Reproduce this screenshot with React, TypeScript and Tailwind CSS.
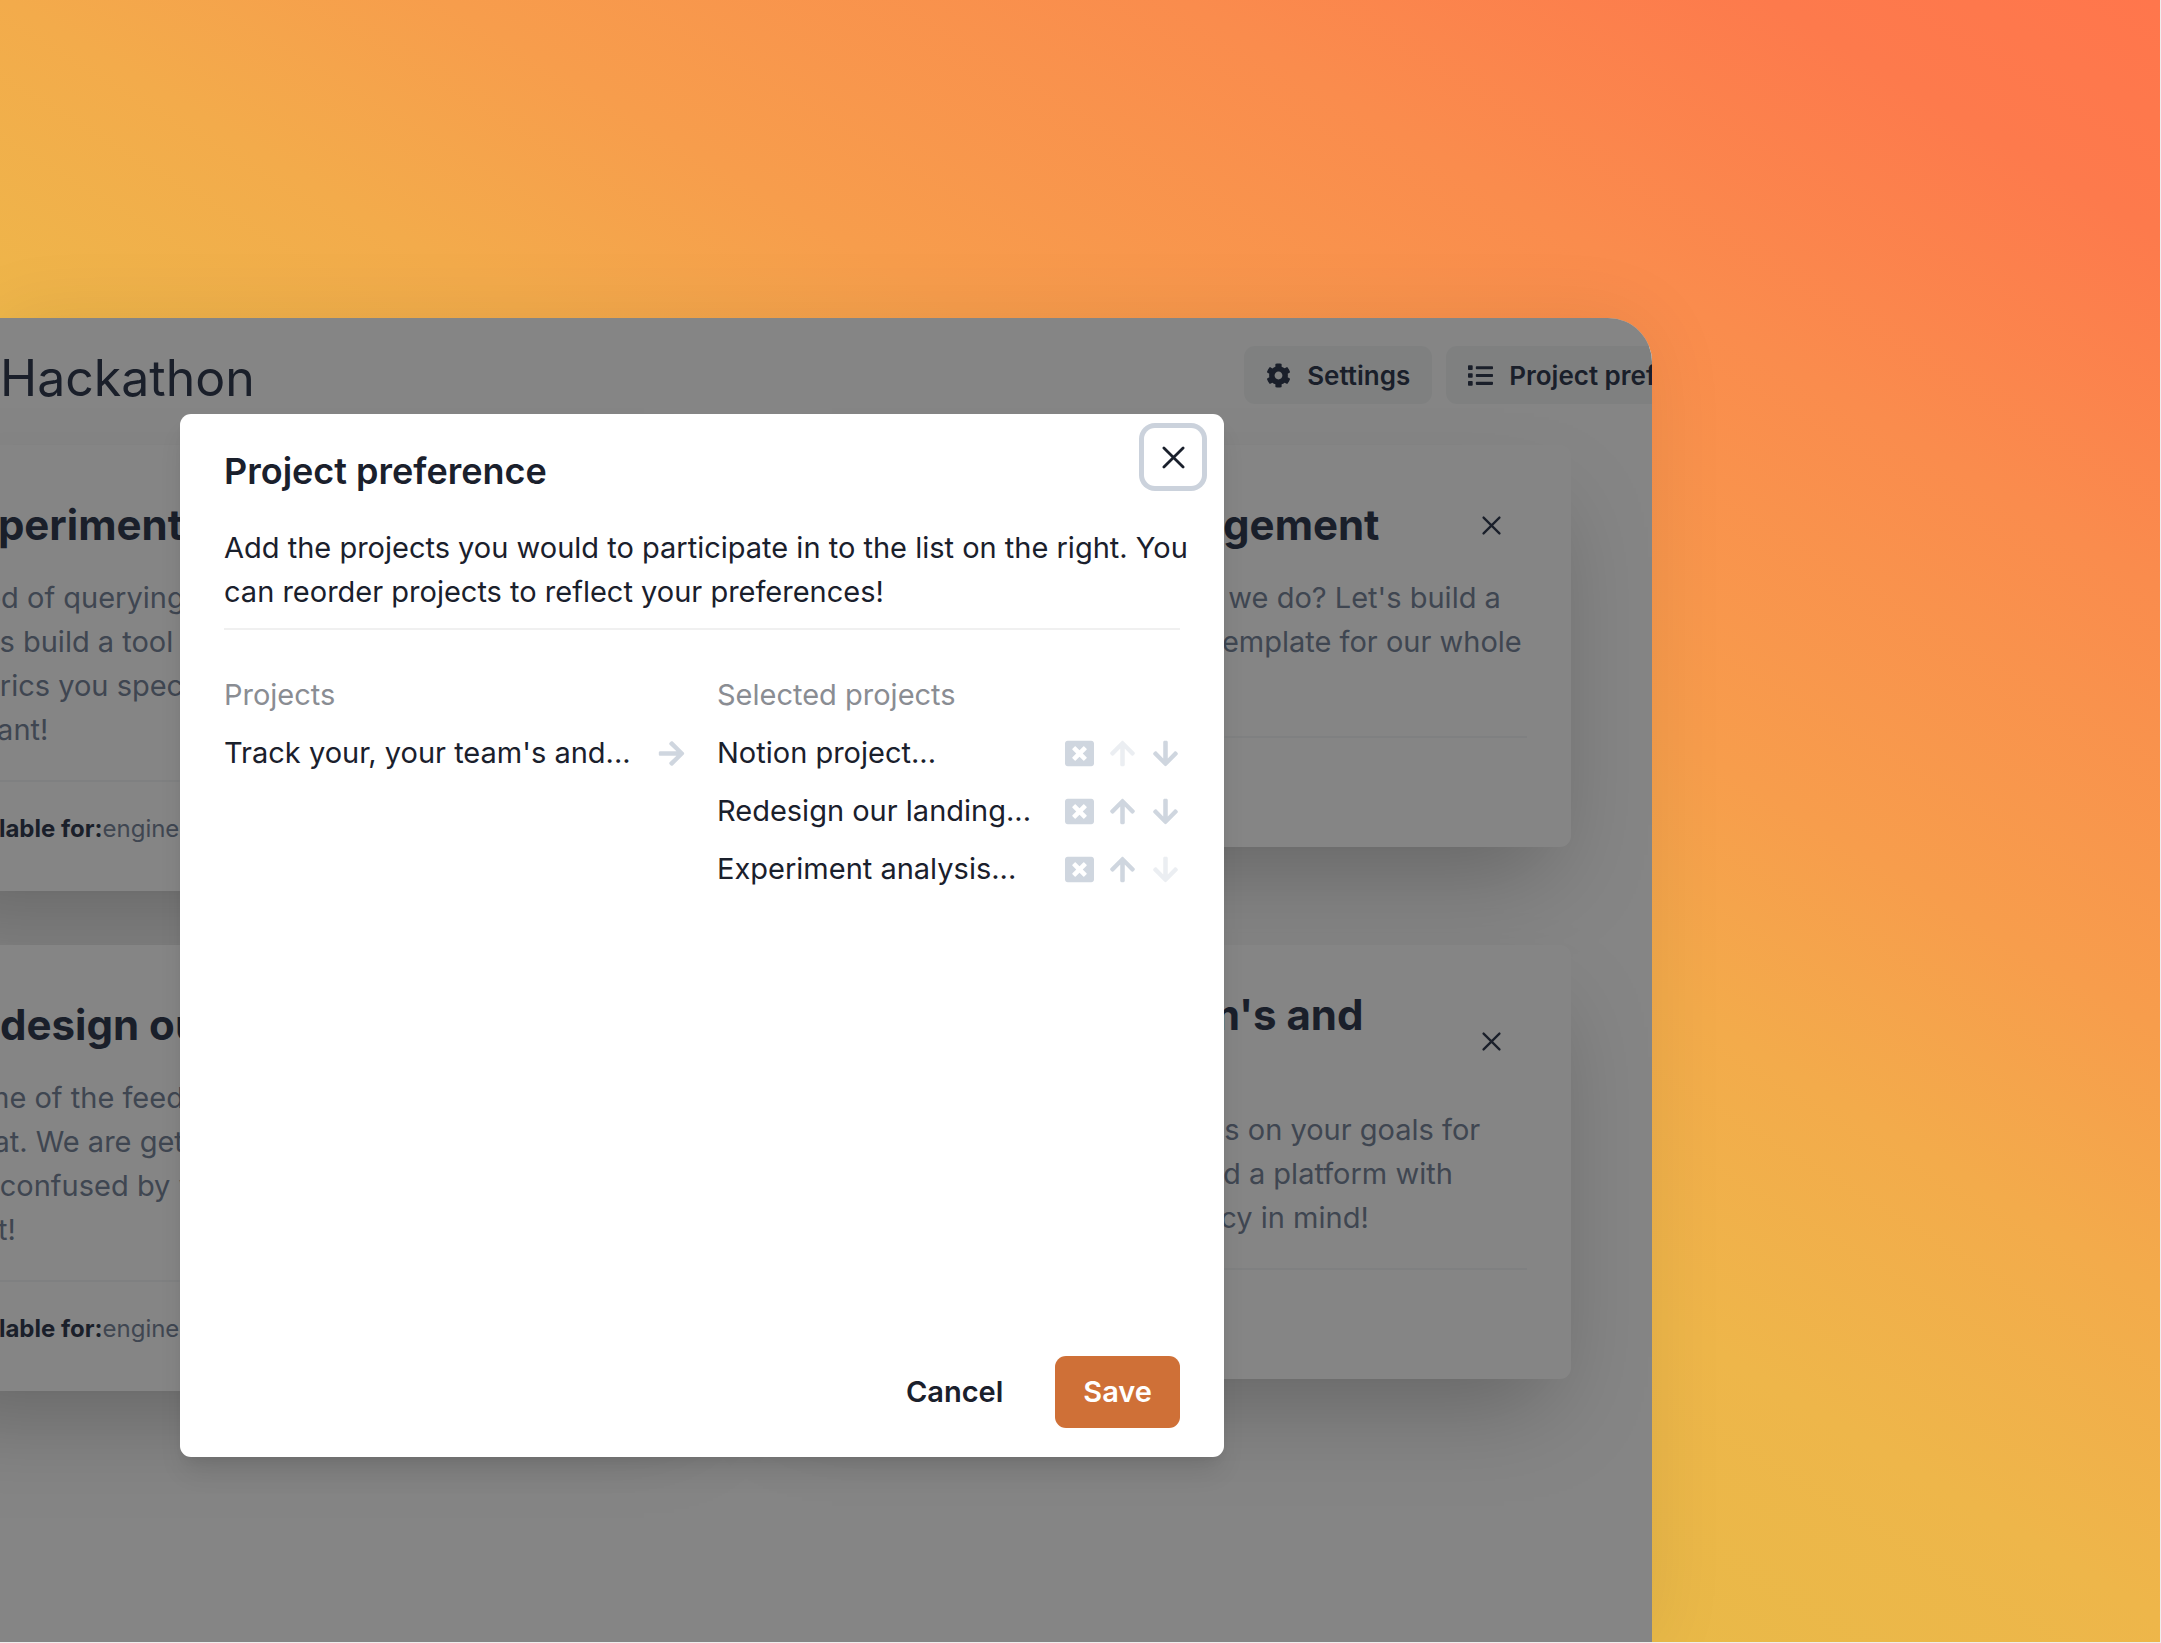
import { FaArrowDown, FaArrowRight, FaArrowUp, FaCog, FaList, FaWindowClose } from "react-icons/fa";

const PROJECTS = ["Track your, your team's and..."];

const SELECTED = ["Notion project...", "Redesign our landing...", "Experiment analysis..."];

function CloseIcon({ className }: { className?: string }) {
  return (
    <svg className={className} viewBox="0 0 24 24" fill="none" stroke="currentColor" strokeWidth="2.9" strokeLinecap="round" aria-hidden="true">
      <path d="M2 2L22 22M22 2L2 22" />
    </svg>
  );
}

type CardProps = { title: string[]; lines: string[]; roles?: string };

function ProjectCard({ title, lines, roles }: CardProps) {
  return (
    <article className="rounded-[11px] bg-white px-11 pt-11 pb-[43px] shadow-[0_45px_91px_-22px_rgba(0,0,0,0.25)]">
      <div className="flex items-center justify-between">
        <h2 className="text-[42px] leading-[52px] font-bold whitespace-nowrap">
          {title.map((line) => (
            <span key={line} className="block">{line}</span>
          ))}
        </h2>
        <button type="button" aria-label="Remove project" className="grid size-[72px] shrink-0 place-items-center">
          <CloseIcon className="size-[19px]" />
        </button>
      </div>
      <p className="pt-[15px] text-[29px] leading-[44px] whitespace-nowrap text-[#7a879c]">
        {lines.map((line) => (
          <span key={line} className="block">{line}</span>
        ))}
      </p>
      <hr className="my-7 border-t-2 border-[#f4f6f8]" />
      <p className="h-[38px] text-2xl leading-[38px] whitespace-nowrap text-[#7a879c]">
        {roles && (
          <>
            <strong className="font-bold text-[#333d52]">Available for:</strong>
            {roles}
          </>
        )}
      </p>
    </article>
  );
}

function ProjectPreferenceDialog() {
  return (
    <section
      role="dialog"
      aria-labelledby="dialog-title"
      className="absolute top-24 left-[180px] flex h-[1043px] w-[1044px] flex-col rounded-[11px] bg-white text-[#1a202c] shadow-[0_18px_27px_-5px_rgba(0,0,0,0.1),0_7px_11px_-4px_rgba(0,0,0,0.05)]"
    >
      <header className="flex justify-between pt-[14px] pr-[22px] pl-11">
        <h2 id="dialog-title" className="pt-4 text-4xl leading-[54px] font-semibold">Project preference</h2>
        <button type="button" aria-label="Close" className="grid size-[58px] place-items-center rounded-[11px] ring-[5px] ring-[#cbd2dc]">
          <CloseIcon className="size-[23px]" />
        </button>
      </header>

      <div className="flex-1 px-11 pt-7">
        <p className="text-[29px] leading-[44px] whitespace-nowrap">
          Add the projects you would to participate in to the list on the right. You
          <br />
          can reorder projects to reflect your preferences!
        </p>
        <hr className="mt-[14px] mb-[43px] border-t-2 border-[#f0f0f0]" />

        <div className="grid grid-cols-[462px_1fr] gap-x-[31px] text-[29px] leading-[44px]">
          <div>
            <h3 className="mb-[14px] text-[#8a8d93]">Projects</h3>
            <ul className="space-y-[14px]">
              {PROJECTS.map((name) => (
                <li key={name} className="flex items-center justify-between">
                  {name}
                  <button type="button" aria-label="Select project" className="text-[#cfd6df]">
                    <FaArrowRight className="size-[29px]" />
                  </button>
                </li>
              ))}
            </ul>
          </div>
          <div>
            <h3 className="mb-[14px] text-[#8a8d93]">Selected projects</h3>
            <ul className="space-y-[14px]">
              {SELECTED.map((name, i) => (
                <li key={name} className="flex items-center justify-between">
                  {name}
                  <span className="flex gap-[14px] text-[#cfd6df]">
                    <button type="button" aria-label="Remove"><FaWindowClose className="size-[29px]" /></button>
                    <button type="button" aria-label="Move up" disabled={i === 0} className="disabled:opacity-40">
                      <FaArrowUp className="size-[29px]" />
                    </button>
                    <button type="button" aria-label="Move down" disabled={i === SELECTED.length - 1} className="disabled:opacity-40">
                      <FaArrowDown className="size-[29px]" />
                    </button>
                  </span>
                </li>
              ))}
            </ul>
          </div>
        </div>
      </div>

      <footer className="flex justify-end gap-6 px-11 pb-[29px] text-[29px] font-semibold">
        <button type="button" className="h-[72px] rounded-[11px] px-7">Cancel</button>
        <button type="button" className="h-[72px] rounded-[11px] bg-[#cf7037] px-7 text-white">Save</button>
      </footer>
    </section>
  );
}

export default function App() {
  return (
    <main className="flex h-screen overflow-hidden border-r border-b border-[#eeeeee] bg-[linear-gradient(31deg,#e9b948_34%,#eeb64a_45%,#f3ab4b_56%,#f79d4c_65%,#fa8c4d_80%,#fd7a4c_92%,#ff764c_100%)] pt-[318px] font-[Inter,sans-serif] text-[#333d52]">
      <div className="relative w-[76.5%] overflow-hidden rounded-tr-[44px] bg-white shadow-[0_0_80px_rgba(0,0,0,0.08)]">
        <header className="flex h-[127px] items-start justify-between pt-7 whitespace-nowrap">
          <h1 className="text-[50px] leading-[64px]">Hackathon</h1>
          <div className="-mr-28 flex gap-[14px] text-[26px] font-semibold">
            <button type="button" className="flex h-[58px] items-center gap-4 rounded-[11px] bg-[#f4f6f6] px-[22px]">
              <FaCog className="size-[25px]" />
              Settings
            </button>
            <button type="button" className="flex h-[58px] items-center gap-4 rounded-[11px] bg-[#f4f6f6] px-[22px]">
              <FaList className="size-[25px]" />
              Project preference
            </button>
          </div>
        </header>

        {/* Board is scrolled sideways, so the first column starts off screen */}
        <div className="mr-[81px] -ml-24 grid grid-cols-2 items-start gap-[54px]">
          <ProjectCard
            title={["Experiment analysis"]}
            lines={["Tired of querying your data?", "Let's build a tool to track all", "metrics you specify and get", "instant!"]}
            roles="engineers"
          />
          <ProjectCard
            title={["Notion project management"]}
            lines={["Can we organise all the things we do? Let's build a", "Notion projects management template for our whole", "team!"]}
          />
          <ProjectCard
            title={["Redesign our landing"]}
            lines={["Some of the feedback was not", "great. We are getting users who", "are confused by what is on it,", "best!"]}
            roles="engineers"
          />
          <ProjectCard
            title={["Track you, your team's and", "company's goals"]}
            lines={["Share all of our regular updates on your goals for", "each of the projects. Let's build a platform with", "speed, fun and full transparency in mind!"]}
          />
        </div>

        <div className="absolute inset-0 bg-black/48" />
        <ProjectPreferenceDialog />
      </div>
    </main>
  );
}
